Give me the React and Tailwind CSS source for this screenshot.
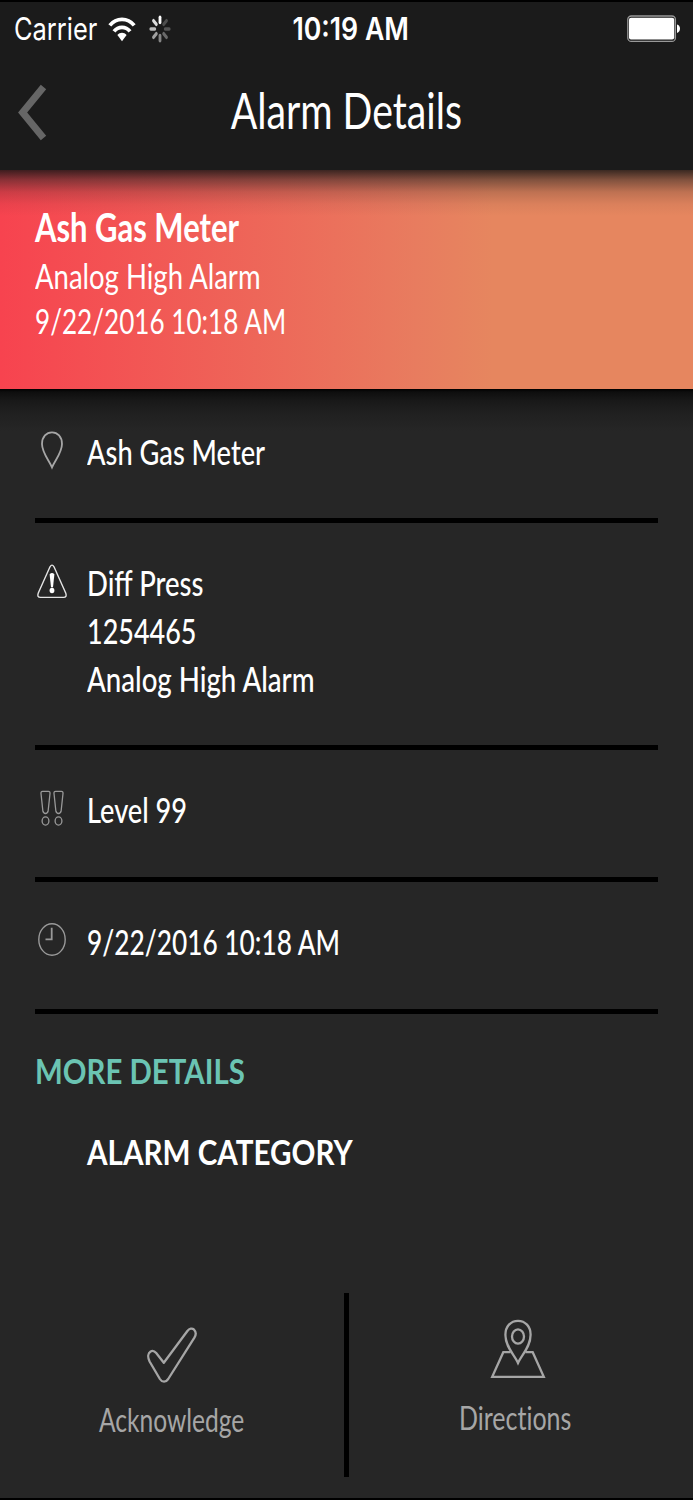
import React from 'react';
import clsx from 'clsx';

const Label = ({ className, children }) => (
  <span className={clsx('inline-block whitespace-nowrap', className)}>{children}</span>
);

const WifiIcon = () => (
  <svg width="28" height="26" viewBox="0 0 28 26" fill="none" stroke="#fff" strokeWidth="3.8">
    <path d="M1.8 9.4C8.4 1.4 19.6 1.4 26.2 9.4" />
    <path d="M6 15.4C10.3 10 17.7 10 22 15.4" />
    <path d="M9.4 19C12 16.1 16 16.1 18.6 19L14 25.2Z" fill="#fff" stroke="none" />
  </svg>
);

const spokes = [
  [0, '#ffffff'],
  [45, '#4e4e4e'],
  [90, '#555555'],
  [135, '#6a6a6a'],
  [180, '#858585'],
  [225, '#a0a0a0'],
  [270, '#bcbcbc'],
  [315, '#dcdcdc'],
];

const Spinner = () => (
  <svg width="22" height="28" viewBox="-11 -11 22 22" preserveAspectRatio="none" strokeLinecap="round" strokeWidth="2.8">
    {spokes.map(([angle, color]) => (
      <line key={angle} x1="0" y1="-5.2" x2="0" y2="-9.2" stroke={color} transform={`rotate(${angle})`} />
    ))}
  </svg>
);

const BatteryIcon = () => (
  <svg width="54" height="28" viewBox="0 0 54 28">
    <rect x="0.8" y="1" width="47.6" height="25.4" rx="3.5" fill="none" stroke="#999" strokeWidth="1.3" />
    <rect x="2" y="2.8" width="45.2" height="21.8" rx="2" fill="#fff" />
    <path d="M50 9.6C54 10.5 54 17 50 18Z" fill="#fff" />
  </svg>
);

const BackIcon = () => (
  <svg width="30" height="58" viewBox="0 0 30 58" fill="none" stroke="#666" strokeWidth="7">
    <path d="M26.5 4L5.6 29.5L26.5 55" />
  </svg>
);

const PinIcon = () => (
  <svg width="34" height="40" viewBox="0 0 34 40" fill="none" stroke="#a6a6a6" strokeWidth="1.8">
    <path d="M17 37.4C14 30.5 7 22.5 7 14C7 6.8 11.5 2.3 17 2.3S27 6.8 27 14C27 22.5 20 30.5 17 37.4Z" />
  </svg>
);

const WarningIcon = () => (
  <svg width="34" height="40" viewBox="0 0 34 40" fill="none" stroke="#e4e4e4" strokeWidth="1.4">
    <path d="M15 5.8Q17 2.4 19 5.8L30.8 32.2Q32.2 36.4 28.5 36.4H5.5Q1.8 36.4 3.2 32.2Z" />
    <path d="M14.6 13.2Q17 10.8 19.4 13.2L18 26.2H16Z" fill="#fff" stroke="none" />
    <ellipse cx="17" cy="29.5" rx="2.4" ry="2.7" fill="#fff" stroke="none" />
  </svg>
);

const LevelIcon = () => (
  <svg width="34" height="40" viewBox="0 0 34 40" fill="none" stroke="#999" strokeWidth="1.3">
    <path d="M7.6 3.3H13.4Q15.2 3.3 15 5.5L13.1 23.2Q12.6 25.5 10.5 25.5T7.9 23.2L6 5.5Q5.8 3.3 7.6 3.3Z" />
    <path d="M20.6 3.3H26.4Q28.2 3.3 28 5.5L26.1 23.2Q25.6 25.5 23.5 25.5T20.9 23.2L19 5.5Q18.8 3.3 20.6 3.3Z" />
    <ellipse cx="10.5" cy="33" rx="3.4" ry="4.1" />
    <ellipse cx="23.5" cy="33" rx="3.4" ry="4.1" />
  </svg>
);

const ClockIcon = () => (
  <svg width="34" height="40" viewBox="0 0 34 40" fill="none" stroke="#999" strokeWidth="1.4">
    <ellipse cx="17" cy="19.5" rx="13.2" ry="15.8" />
    <path d="M16.7 7.8V19.4H10.5" strokeWidth="1.8" />
  </svg>
);

const CheckIcon = () => (
  <svg width="52" height="60" viewBox="0 0 52 60" fill="none" stroke="#a6a6a6" strokeWidth="2.3" strokeLinejoin="round">
    <path d="M3.6 35.5C1.4 31 2 27 4.6 25.4C6.8 24.2 8.5 25 10.2 27L17.8 36.8L41.4 5C43.4 2.4 46.1 2 48.1 3.7C50 5.7 50.2 8.7 48.4 11.7L22.2 53C19.8 56.6 16.2 56.6 13.9 53Z" />
  </svg>
);

const DirectionsIcon = () => (
  <svg width="56" height="60" viewBox="0 0 56 60" fill="none" stroke="#a6a6a6" strokeWidth="2.3">
    <path d="M28 44C24.5 36 15.4 28 15.4 15.8C15.4 7.4 20.8 1.8 28 1.8S40.6 7.4 40.6 15.8C40.6 28 31.5 36 28 44Z" />
    <ellipse cx="28" cy="17.5" rx="6" ry="7.2" />
    <path d="M20.6 33.2H13.3L2.2 57.8H53.8L42.7 33.2H35.4" />
  </svg>
);

const Row = ({ icon, className, children }) => (
  <div className={clsx('mx-[35px] flex border-b-[5px] border-black', className)}>
    <div className="w-[52px] shrink-0 pt-[3px]">{icon}</div>
    <div className="flex flex-col items-start text-[35px] leading-[48px] font-medium">{children}</div>
  </div>
);

const StatusBar = () => (
  <div className="flex h-[56px] items-center justify-between border-t-2 border-black font-['Inter',sans-serif] text-[31px]">
    <div className="flex w-[236px] items-center pl-[13px]">
      <div className="w-[95px] pl-px">
        <Label className="origin-left scale-x-[0.82]">Carrier</Label>
      </div>
      <WifiIcon />
      <div className="ml-[13px]">
        <Spinner />
      </div>
    </div>
    <Label className="origin-center scale-x-[0.86] pt-px font-semibold">10:19 AM</Label>
    <div className="flex w-[227px] justify-end pr-[12px]">
      <BatteryIcon />
    </div>
  </div>
);

const App = () => {
  return (
    <div className="flex h-[1500px] w-[693px] flex-col overflow-hidden border-b-2 border-black bg-[#262626] font-['Lato',sans-serif] text-white">
      <header className="h-[170px] shrink-0 bg-[#1b1b1b]">
        <StatusBar />
        <div className="flex h-[112px] items-center justify-between">
          <div className="w-[120px] pl-[17px]">
            <BackIcon />
          </div>
          <h1 className="pb-[4px] text-[50px] leading-[60px]">
            <Label className="origin-center scale-x-[0.785]">Alarm Details</Label>
          </h1>
          <div className="w-[120px]" />
        </div>
      </header>

      <section className="h-[218.5px] shrink-0 bg-[linear-gradient(90deg,#f7434f_0%,#e87c5f_60%,#e6865f_71%)]">
        <div className="flex h-full flex-col bg-[linear-gradient(180deg,rgba(20,20,20,0.82)_0px,rgba(30,30,30,0.5)_10px,rgba(30,30,30,0.2)_22px,rgba(30,30,30,0.06)_34px,transparent_46px)] pt-[33px] pl-[35px]">
          <div className="text-[40px] leading-[48px] font-bold">
            <Label className="origin-left scale-x-[0.774]">Ash Gas Meter</Label>
          </div>
          <div className="mt-[2px] text-[35px] leading-[44.5px]">
            <Label className="origin-left scale-x-[0.786]">Analog High Alarm</Label>
          </div>
          <div className="text-[35px] leading-[44.5px]">
            <Label className="origin-left scale-x-[0.746]">9/22/2016 10:18 AM</Label>
          </div>
        </div>
      </section>

      <main className="flex-1 bg-[linear-gradient(180deg,#000_0px,#0e0e0e_3px,#191919_12px,#202020_24px,#262626_42px)]">
        <Row icon={<PinIcon />} className="h-[134.5px] pt-[38px]">
          <Label className="origin-left scale-x-[0.778]">Ash Gas Meter</Label>
        </Row>
        <Row icon={<WarningIcon />} className="h-[226.5px] pt-[35px]">
          <Label className="origin-left scale-x-[0.785]">Diff Press</Label>
          <Label className="origin-left scale-x-[0.77]">1254465</Label>
          <Label className="origin-left scale-x-[0.79]">Analog High Alarm</Label>
        </Row>
        <Row icon={<LevelIcon />} className="h-[132px] pt-[35px]">
          <Label className="origin-left scale-x-[0.776]">Level 99</Label>
        </Row>
        <Row icon={<ClockIcon />} className="h-[132px] pt-[35px]">
          <Label className="origin-left scale-x-[0.751]">9/22/2016 10:18 AM</Label>
        </Row>
        <div className="pt-[32.5px] pl-[35px] text-[35px] leading-[48px] font-bold">
          <div className="text-[#6bc4b3]">
            <Label className="origin-left scale-x-[0.84]">MORE DETAILS</Label>
          </div>
          <div className="mt-[33px] pl-[52px]">
            <Label className="origin-left scale-x-[0.846]">ALARM CATEGORY</Label>
          </div>
        </div>
      </main>

      <footer className="mb-[21px] flex h-[184px] shrink-0 text-[33px] leading-[40px] text-[#a6a6a6]">
        <div className="flex w-[344px] flex-col items-center pt-[33px]">
          <CheckIcon />
          <Label className="mt-[13px] scale-x-[0.745]">Acknowledge</Label>
        </div>
        <div className="w-[5px] bg-black" />
        <div className="flex flex-1 flex-col items-center pt-[26px] pr-[7px]">
          <DirectionsIcon />
          <Label className="relative right-[2px] mt-[18px] scale-x-[0.757] [font-variant-ligatures:none]">Directions</Label>
        </div>
      </footer>
    </div>
  );
};

export default App;
